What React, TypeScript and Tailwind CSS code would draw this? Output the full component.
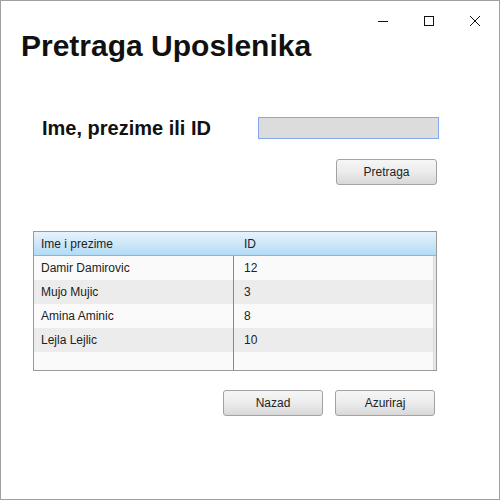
import React from 'react';

const rows = [
  { name: 'Damir Damirovic', id: '12' },
  { name: 'Mujo Mujic', id: '3' },
  { name: 'Amina Aminic', id: '8' },
  { name: 'Lejla Lejlic', id: '10' },
];

const btn =
  'h-[26px] rounded-[3px] border border-[#a3a3a3] bg-gradient-to-b from-[#f6f6f6] via-[#ececec] to-[#d8d8d8] text-[12px] text-[#222]';

const App: React.FC = () => {
  return (
    <div
      className="relative h-[500px] w-[500px] border border-[#a0a0a0] bg-white"
      style={{ fontFamily: '"Liberation Sans", Arial, sans-serif' }}
    >
      {/* window controls */}
      <div className="absolute right-[18px] top-[14px] flex items-center gap-[34px] text-black">
        <svg width="12" height="12" viewBox="0 0 12 12">
          <path d="M1 6.5h10" stroke="#111" strokeWidth="1" />
        </svg>
        <svg width="12" height="12" viewBox="0 0 12 12">
          <rect x="1.5" y="1.5" width="9" height="9" fill="none" stroke="#111" strokeWidth="1" />
        </svg>
        <svg width="12" height="12" viewBox="0 0 12 12">
          <path d="M1 1l10 10M11 1L1 11" stroke="#111" strokeWidth="1" />
        </svg>
      </div>

      <div className="flex flex-col pl-[20px] pt-[27px]">
        <h1 className="text-[30px] font-bold leading-[36px] text-[#111]">Pretraga Uposlenika</h1>

        <div className="mt-[49px] flex items-center">
          <span className="ml-[21px] w-[216px] text-[20px] font-bold text-[#111]">Ime, prezime ili ID</span>
          <div className="h-[22px] w-[181px] border border-[#86a8f0] bg-[#dcdcdc]" />
        </div>

        <div className="mt-[16px] flex justify-end pr-[62px]">
          <button className={`${btn} w-[101px]`}>Pretraga</button>
        </div>

        <div className="ml-[12px] mt-[46px] w-[404px] border border-[#9a9a9a] text-[12px] text-[#222]">
          <div className="flex h-[24px] border-b border-[#8fb4d6] bg-gradient-to-b from-[#e6f3fc] via-[#cfe7f8] to-[#b2dbf6]">
            <div className="flex w-[201px] items-center pl-[7px]">Ime i prezime</div>
            <div className="flex items-center pl-[9px]">ID</div>
          </div>
          <div className="flex">
            <div className="flex-1">
              {rows.map((r, i) => (
                <div key={r.name} className={`flex h-[24px] ${i % 2 === 0 ? 'bg-[#fafafa]' : 'bg-[#ececec]'}`}>
                  <div className="flex w-[200px] items-center border-r border-[#888] pl-[7px]">{r.name}</div>
                  <div className="flex items-center pl-[10px]">{r.id}</div>
                </div>
              ))}
              <div className="flex h-[18px] bg-[#fafafa]">
                <div className="w-[200px] border-r border-[#888]" />
              </div>
            </div>
            <div className="w-[3px] border-l border-[#dadada] bg-[#e6e6e6]" />
          </div>
        </div>

        <div className="mt-[19px] flex justify-end gap-[12px] pr-[64px]">
          <button className={`${btn} w-[100px]`}>Nazad</button>
          <button className={`${btn} w-[100px]`}>Azuriraj</button>
        </div>
      </div>
    </div>
  );
};

export default App;
